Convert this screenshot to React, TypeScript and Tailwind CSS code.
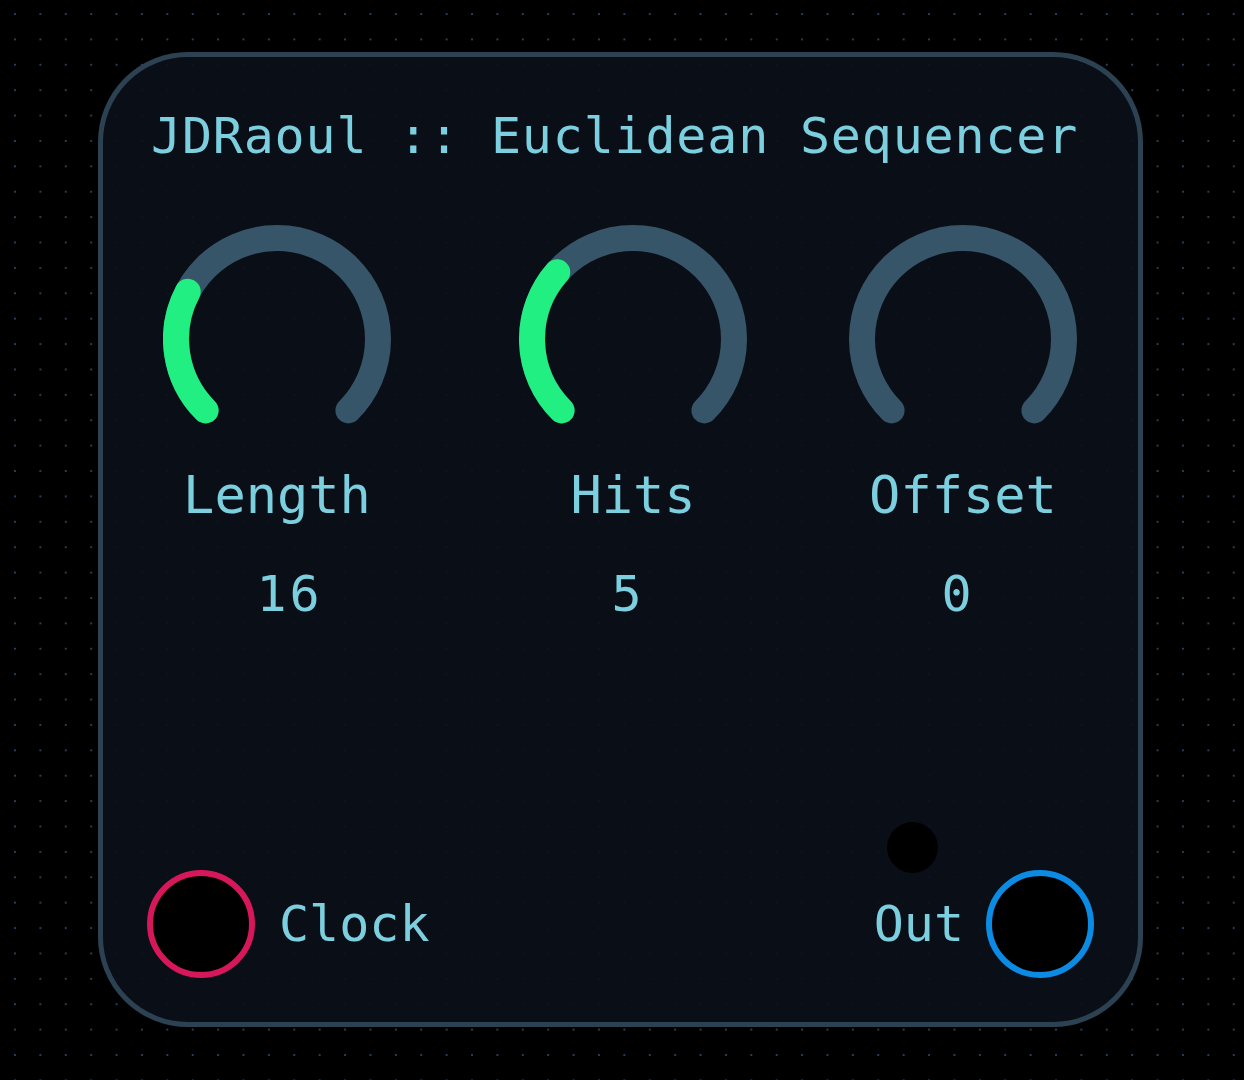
import React from "react";

const mono = "font-['DejaVu_Sans_Mono','Liberation_Mono',monospace]";

function arcPath(cx: number, cy: number, r: number, from: number, to: number) {
  const rad = (d: number) => (d * Math.PI) / 180;
  const x1 = cx + r * Math.sin(rad(from));
  const y1 = cy - r * Math.cos(rad(from));
  const x2 = cx + r * Math.sin(rad(to));
  const y2 = cy - r * Math.cos(rad(to));
  const large = to - from > 180 ? 1 : 0;
  return `M ${x1.toFixed(2)} ${y1.toFixed(2)} A ${r} ${r} 0 ${large} 1 ${x2.toFixed(2)} ${y2.toFixed(2)}`;
}

interface KnobProps {
  label: string;
  value: string;
  fill: number;
  valueClass: string;
}

function Knob({ label, value, fill, valueClass }: KnobProps) {
  const end = -135 + 270 * fill;
  return (
    <div className="flex w-[228px] flex-col items-center">
      <svg width="228" height="200" viewBox="0 0 228 200">
        <path
          d={arcPath(114, 114, 101, -135, 135)}
          fill="none"
          stroke="#375569"
          strokeWidth="26"
          strokeLinecap="round"
        />
        {fill > 0 && (
          <path
            d={arcPath(114, 114, 101, -135, end)}
            fill="none"
            stroke="#22ef82"
            strokeWidth="26"
            strokeLinecap="round"
          />
        )}
      </svg>
      <div className={`mt-[44px] text-[52px] leading-none text-[#7ccfdf] ${mono}`}>{label}</div>
      <div className={`mt-[48px] text-[50px] leading-none tracking-[3px] text-[#7ccfdf] ${mono} ${valueClass}`}>
        {value}
      </div>
    </div>
  );
}

export default function App() {
  return (
    <div className="min-h-screen bg-black bg-[radial-gradient(circle,#22405a_1px,transparent_1.4px)] bg-[length:25.4px_25.4px] bg-[position:2.3px_1.3px] pt-[52px] pl-[98px]">
      {/* Module panel */}
      <div className="flex h-[975px] w-[1045px] flex-col rounded-[90px] border-[5px] border-[#2c4252] bg-[#0b1018]/90">
        <h1 className={`pt-[54px] pl-[48px] text-[50px] leading-none tracking-[0.8px] text-[#7ccfdf] ${mono}`}>
          JDRaoul :: Euclidean Sequencer
        </h1>

        {/* Knobs */}
        <div className="mt-[64px] flex pl-[60px]">
          <Knob label="Length" value="16" fill={0.27} valueClass="ml-[25px]" />
          <div className="ml-[128px]">
            <Knob label="Hits" value="5" fill={0.32} valueClass="mr-[10px]" />
          </div>
          <div className="ml-[102px]">
            <Knob label="Offset" value="0" fill={0} valueClass="mr-[10px]" />
          </div>
        </div>

        <div className="flex-1" />

        {/* Jacks */}
        <div className="flex items-center justify-between px-[44px] pb-[44px]">
          <div className="flex items-center gap-[24px]">
            <div className="h-[108px] w-[108px] shrink-0 rounded-full border-[6px] border-[#d6185a] bg-black" />
            <span className={`text-[50px] leading-none text-[#7ccfdf] ${mono}`}>Clock</span>
          </div>
          <div className="flex items-center gap-[22px]">
            <div className="relative">
              <div className="absolute -top-[77px] left-[13px] h-[51px] w-[51px] rounded-full bg-black" />
              <span className={`text-[50px] leading-none text-[#7ccfdf] ${mono}`}>Out</span>
            </div>
            <div className="h-[108px] w-[108px] shrink-0 rounded-full border-[6px] border-[#0b8be3] bg-black" />
          </div>
        </div>
      </div>
    </div>
  );
}
